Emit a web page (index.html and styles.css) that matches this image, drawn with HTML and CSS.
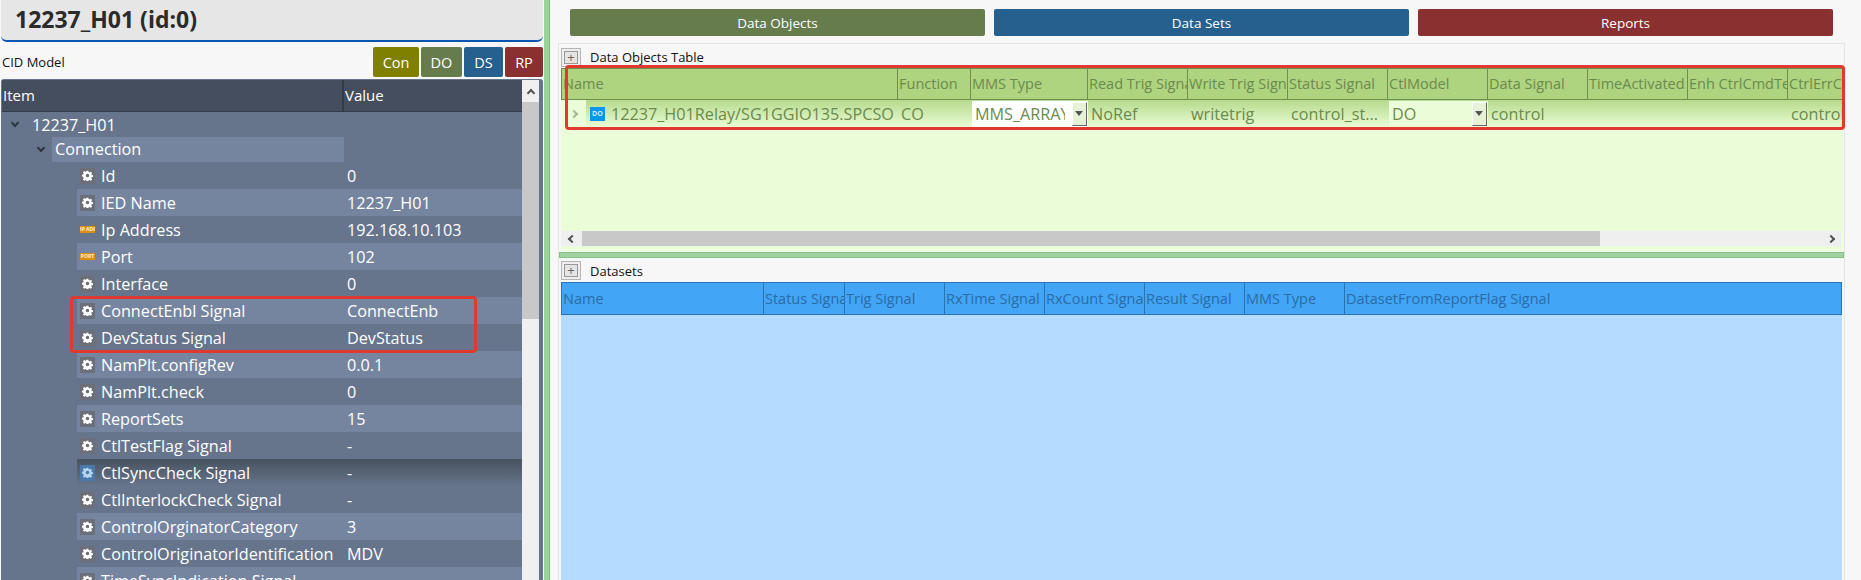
FILE: index.html
```html
<!DOCTYPE html>
<html lang="en">
    <head>
        <meta charset="UTF-8">
        <title>12237_H01</title>
        <link rel="stylesheet" href="styles.css">
    </head>
    <body>
        <svg class="defs" width="0" height="0">
            <symbol id="gear" viewBox="0 0 16 16">
                <path d="M6.7 1h2.6l.4 2 1.3.6 1.8-1.1 1.8 1.8-1.1 1.8.6 1.3 1.9.4v2.4l-1.9.4-.6 1.3 1.1 1.8-1.8 1.8-1.8-1.1-1.3.6-.4 1.9H6.7l-.4-1.9-1.3-.6-1.8 1.1-1.8-1.8 1.1-1.8-.6-1.3L0 9.2V6.8l1.9-.4.6-1.3-1.1-1.8 1.8-1.8 1.8 1.1 1.3-.6zM8 5.4a2.6 2.6 0 1 0 0 5.2 2.6 2.6 0 0 0 0-5.2z" fill-rule="evenodd"/>
            </symbol>
        </svg>

        <div class="left">
            <div class="title-bar">12237_H01 (id:0)</div>
            <div class="tool-row">
                <span class="tool-label">CID Model</span>
                <div class="tool-buttons">
                    <button class="tool-btn con">Con</button>
                    <button class="tool-btn do">DO</button>
                    <button class="tool-btn ds">DS</button>
                    <button class="tool-btn rp">RP</button>
                </div>
            </div>

            <div class="tree">
                <div class="tree-main">
                    <div class="tree-head">
                        <div class="tree-head-item">Item</div>
                        <div class="tree-head-value">Value</div>
                    </div>

                    <div class="root-row"><span class="chevron"></span>12237_H01</div>
                    <div class="conn-row"><span class="chevron"></span><span class="conn-name">Connection</span></div>

                    <div class="row"><div class="name"><svg class="gear-box"><use href="#gear" x="2" y="2" width="11" height="11"/></svg>Id</div><div class="value">0</div></div>
                    <div class="row band"><div class="name"><svg class="gear-box"><use href="#gear" x="2" y="2" width="11" height="11"/></svg>IED Name</div><div class="value">12237_H01</div></div>
                    <div class="row"><div class="name"><span class="tag">IP ADR</span>Ip Address</div><div class="value">192.168.10.103</div></div>
                    <div class="row band"><div class="name"><span class="tag">PORT</span>Port</div><div class="value">102</div></div>
                    <div class="row"><div class="name"><svg class="gear-box"><use href="#gear" x="2" y="2" width="11" height="11"/></svg>Interface</div><div class="value">0</div></div>
                    <div class="mark-rows">
                        <div class="row band"><div class="name"><svg class="gear-box"><use href="#gear" x="2" y="2" width="11" height="11"/></svg>ConnectEnbl Signal</div><div class="value">ConnectEnb</div></div>
                        <div class="row"><div class="name"><svg class="gear-box"><use href="#gear" x="2" y="2" width="11" height="11"/></svg>DevStatus Signal</div><div class="value">DevStatus</div></div>
                        <div class="red-box tree-mark"></div>
                    </div>
                    <div class="row band"><div class="name"><svg class="gear-box"><use href="#gear" x="2" y="2" width="11" height="11"/></svg>NamPlt.configRev</div><div class="value">0.0.1</div></div>
                    <div class="row"><div class="name"><svg class="gear-box"><use href="#gear" x="2" y="2" width="11" height="11"/></svg>NamPlt.check</div><div class="value">0</div></div>
                    <div class="row band"><div class="name"><svg class="gear-box"><use href="#gear" x="2" y="2" width="11" height="11"/></svg>ReportSets</div><div class="value">15</div></div>
                    <div class="row"><div class="name"><svg class="gear-box"><use href="#gear" x="2" y="2" width="11" height="11"/></svg>CtlTestFlag Signal</div><div class="value">-</div></div>
                    <div class="row hover"><div class="name"><svg class="gear-box blue"><use href="#gear" x="2" y="2" width="11" height="11"/></svg>CtlSyncCheck Signal</div><div class="value">-</div></div>
                    <div class="row"><div class="name"><svg class="gear-box"><use href="#gear" x="2" y="2" width="11" height="11"/></svg>CtlInterlockCheck Signal</div><div class="value">-</div></div>
                    <div class="row band"><div class="name"><svg class="gear-box"><use href="#gear" x="2" y="2" width="11" height="11"/></svg>ControlOrginatorCategory</div><div class="value">3</div></div>
                    <div class="row"><div class="name"><svg class="gear-box"><use href="#gear" x="2" y="2" width="11" height="11"/></svg>ControlOriginatorIdentification</div><div class="value">MDV</div></div>
                    <div class="row band"><div class="name"><svg class="gear-box"><use href="#gear" x="2" y="2" width="11" height="11"/></svg>TimeSyncIndication Signal</div><div class="value">-</div></div>
                </div>
                <div class="tree-scroll">
                    <div class="scroll-up"><span class="arrow-up"></span></div>
                    <div class="scroll-thumb"></div>
                </div>
            </div>
        </div>

        <div class="splitter"></div>

        <div class="right">
            <div class="tabs">
                <button class="tab do">Data Objects</button>
                <button class="tab ds">Data Sets</button>
                <button class="tab rp">Reports</button>
            </div>

            <div class="group">
                <div class="group-head">
                    <span class="plus">+</span>
                    <span class="group-title">Data Objects Table</span>
                </div>
                <div class="objects">
                    <div class="grid-wrap">
                        <div class="obj-grid obj-head">
                            <div>Name</div>
                            <div>Function</div>
                            <div>MMS Type</div>
                            <div>Read Trig Signal</div>
                            <div>Write Trig Signal</div>
                            <div>Status Signal</div>
                            <div>CtlModel</div>
                            <div>Data Signal</div>
                            <div>TimeActivated</div>
                            <div>Enh CtrlCmdTest</div>
                            <div>CtrlErrCode</div>
                        </div>
                        <div class="obj-grid obj-row">
                            <div class="name-cell">
                                <span class="expander"><span class="arrow-right"></span></span>
                                <span class="do-icon">DO</span>
                                <span>12237_H01Relay/SG1GGIO135.SPCSO</span>
                            </div>
                            <div class="cell">CO</div>
                            <div class="combo white"><span class="combo-text">MMS_ARRAY</span><span class="combo-btn"></span></div>
                            <div class="cell">NoRef</div>
                            <div class="cell">writetrig</div>
                            <div class="cell">control_st...</div>
                            <div class="combo"><span class="combo-text">DO</span><span class="combo-btn"></span></div>
                            <div class="cell">control</div>
                            <div class="cell"></div>
                            <div class="cell"></div>
                            <div class="cell">control</div>
                        </div>
                        <div class="red-box table-mark"></div>
                    </div>
                    <div class="obj-empty"></div>
                    <div class="h-scroll">
                        <span class="h-arrow"><span class="arrow-left"></span></span>
                        <span class="h-thumb"></span>
                        <span class="h-arrow end"><span class="arrow-right dark"></span></span>
                    </div>
                </div>

                <div class="group-split"></div>

                <div class="group-head low">
                    <span class="plus">+</span>
                    <span class="group-title">Datasets</span>
                </div>
                <div class="ds-grid">
                    <div>Name</div>
                    <div>Status Signal</div>
                    <div>Trig Signal</div>
                    <div>RxTime Signal</div>
                    <div>RxCount Signal</div>
                    <div>Result Signal</div>
                    <div>MMS Type</div>
                    <div>DatasetFromReportFlag Signal</div>
                </div>
                <div class="ds-body"></div>
            </div>
        </div>
    </body>
</html>
```

FILE: styles.css
```css
* {
    box-sizing: border-box;
}
html, body {
    margin: 0;
    height: 580px;
    overflow: hidden;
}
body {
    display: flex;
    background-color: #f7f7f7;
    font-family: "Open Sans", "Noto Sans", sans-serif;
    font-size: 16.2px;
    color: #fff;
}
button {
    border: none;
    padding: 0;
    font-family: inherit;
    color: #fff;
}
.defs {
    position: absolute;
}

/* left side */
.left {
    width: 542px;
    margin-left: 1px;
    flex: none;
}
.title-bar {
    height: 42px;
    padding-left: 14px;
    padding-bottom: 2px;
    display: flex;
    align-items: center;
    background-color: #e6e6e6;
    border-bottom: 2px solid #0a55b0;
    border-radius: 0 0 6px 6px;
    color: #2b2b2b;
    font-size: 23px;
    font-weight: 700;
}
.tool-row {
    height: 37px;
    padding-top: 5px;
    display: flex;
    justify-content: space-between;
}
.tool-label {
    margin-left: 1px;
    line-height: 30px;
    color: #111;
    font-size: 13px;
}
.tool-buttons {
    display: flex;
    gap: 2px;
}
.tool-btn {
    height: 30px;
    border-radius: 2px;
    font-size: 14.5px;
}
.tool-btn.con { width: 46px; background-color: #808000; }
.tool-btn.do { width: 41px; background-color: #667c4d; }
.tool-btn.ds { width: 39px; background-color: #26608f; }
.tool-btn.rp { width: 38px; background-color: #8a3030; }

.tree {
    height: 501px;
    padding: 1px 5px 0 1px;
    display: flex;
    background-color: #66758c;
    border-radius: 3px 3px 0 0;
}
.tree-main {
    width: 520px;
    flex: none;
}
.tree-head {
    height: 32px;
    display: flex;
    background-color: #454e5e;
    border-bottom: 1px solid #333b47;
    font-size: 15px;
    line-height: 31px;
}
.tree-head-item {
    width: 342px;
    padding-left: 1px;
    border-right: 2px solid #333b47;
}
.tree-head-value {
    padding-left: 1px;
}
.root-row {
    height: 25px;
    padding-left: 10px;
    display: flex;
    align-items: center;
}
.conn-row {
    height: 25px;
    padding-left: 36px;
    display: flex;
    align-items: center;
}
.chevron {
    width: 6px;
    height: 6px;
    margin-right: 14px;
    margin-top: -4px;
    border-right: 2px solid #2e3542;
    border-bottom: 2px solid #2e3542;
    transform: rotate(45deg);
}
.conn-row .chevron {
    margin-right: 8px;
}
.conn-name {
    width: 292px;
    height: 25px;
    padding-left: 3px;
    line-height: 25px;
    background-color: #76859f;
}
.row {
    height: 27px;
    margin-left: 75px;
    display: flex;
    align-items: center;
}
.band {
    background-color: #76859f;
}
.hover {
    background: linear-gradient(#48525f, #66758c);
}
.name {
    width: 267px;
    padding-left: 3px;
    display: flex;
    align-items: center;
    white-space: nowrap;
}
.value {
    padding-left: 3px;
}
.gear-box {
    width: 15px;
    height: 16px;
    margin-right: 6px;
    flex: none;
    background-color: #6d6f78;
    fill: #fff;
}
.gear-box.blue {
    background-color: #4a78a8;
    fill: #b5d5f0;
}
.tag {
    width: 15px;
    height: 7px;
    margin-right: 6px;
    flex: none;
    background-color: #e08e12;
    color: #fff3d0;
    font-size: 5px;
    font-weight: 700;
    line-height: 7px;
    text-align: center;
    overflow: hidden;
    white-space: nowrap;
}
.mark-rows {
    position: relative;
}
.red-box {
    position: absolute;
    border: 3px solid #e0392f;
    border-radius: 4px;
}
.tree-mark {
    left: 68px;
    top: -1px;
    width: 407px;
    height: 57px;
}
.tree-scroll {
    width: 17px;
    flex: none;
    align-self: flex-start;
    height: 500px;
    background-color: #f0f0f0;
}
.scroll-up {
    height: 22px;
    display: flex;
    justify-content: center;
    padding-top: 10px;
}
.arrow-up {
    width: 6px;
    height: 6px;
    border-left: 2px solid #555;
    border-top: 2px solid #555;
    transform: rotate(45deg);
}
.scroll-thumb {
    height: 217px;
    background-color: #c8c8c8;
}

.splitter {
    width: 6px;
    flex: none;
    margin-left: 1px;
    background-color: #98d598;
    border-right: 1px solid #7dbb7d;
}

/* right side */
.right {
    flex: 1;
    min-width: 0;
    padding: 9px 16px 0 8px;
}
.tabs {
    height: 27px;
    margin-left: 12px;
    margin-right: 12px;
    display: flex;
    gap: 9px;
}
.tab {
    flex: 1;
    border-radius: 2px;
    font-size: 13.5px;
}
.tab.do { background-color: #667c4d; }
.tab.ds { background-color: #26608f; }
.tab.rp { background-color: #8a3030; }

.group {
    height: 537px;
    margin-top: 7px;
    padding-left: 2px;
    border: 1px solid #e4e4e4;
    border-bottom: none;
    display: flex;
    flex-direction: column;
}
.group-head {
    height: 24px;
    padding-top: 2px;
    display: flex;
    align-items: center;
    gap: 9px;
    flex: none;
}
.group-head.low {
    height: 23px;
    padding-top: 0;
}
.plus {
    width: 20px;
    height: 19px;
    background-color: #e4e4e4;
    border: 1px solid #b5b5b5;
    box-shadow: inset 0 0 0 2px #eee, inset 0 0 0 3px #999;
    color: #666;
    font-size: 13px;
    line-height: 16px;
    text-align: center;
}
.group-title {
    color: #111;
    font-size: 13px;
}

.objects {
    height: 183px;
    margin-right: 1px;
    display: flex;
    flex-direction: column;
    flex: none;
    background-color: #ebfdd8;
}
.grid-wrap {
    position: relative;
}
.obj-grid {
    display: grid;
    grid-template-columns: 337px 73px 117px repeat(7, 100px) 55px;
}
.obj-head {
    height: 32px;
    background-color: #afd480;
    border: 1px solid #6f8f50;
    border-width: 1px 0;
    color: #6b8a4c;
    font-size: 14.5px;
    line-height: 30px;
}
.obj-head div {
    padding-left: 1px;
    border-right: 1px solid #6f8f50;
    overflow: hidden;
    white-space: nowrap;
}
.obj-head div:first-child {
    border-left: 1px solid #6f8f50;
}
.obj-head div:last-child {
    border-right: none;
}
.obj-row {
    height: 28px;
    background: linear-gradient(#b6da8c, #ebfdd8);
    color: #6b8a4c;
    font-size: 16.2px;
    line-height: 28px;
}
.name-cell {
    padding-right: 2px;
    display: flex;
    align-items: center;
    white-space: nowrap;
    overflow: hidden;
}
.expander {
    width: 25px;
    height: 28px;
    margin-right: 4px;
    flex: none;
    display: flex;
    align-items: center;
    justify-content: center;
    background-color: #ebfdd8;
}
.arrow-right {
    width: 6px;
    height: 6px;
    border-right: 2px solid #a8b69a;
    border-top: 2px solid #a8b69a;
    transform: rotate(45deg);
}
.arrow-right.dark {
    border-color: #555;
}
.arrow-left {
    width: 6px;
    height: 6px;
    border-left: 2px solid #555;
    border-bottom: 2px solid #555;
    transform: rotate(45deg);
}
.do-icon {
    width: 15px;
    height: 14px;
    margin-right: 6px;
    flex: none;
    background-color: #0a96ea;
    color: #cdeafc;
    font-size: 7px;
    font-weight: 700;
    line-height: 14px;
    text-align: center;
}
.cell {
    padding-left: 3px;
    white-space: nowrap;
    overflow: hidden;
}
.combo {
    margin: 1px 0 0 1px;
    padding-left: 3px;
    display: flex;
    align-items: center;
    justify-content: space-between;
    background-color: #ebfdd8;
    border-bottom: 1px solid #6f8f50;
    overflow: hidden;
}
.combo.white {
    background-color: #fff;
}
.combo-text {
    width: 90px;
    overflow: hidden;
    white-space: nowrap;
    line-height: 25px;
}
.combo-btn {
    width: 15px;
    height: 24px;
    margin-right: 1px;
    flex: none;
    position: relative;
    background-color: #e6f2d8;
    border: 1px solid #fff;
    border-right: 1px solid #666;
    border-bottom: 1px solid #666;
}
.combo-btn::after {
    content: "";
    position: absolute;
    left: 2px;
    top: 8px;
    border: 4px solid transparent;
    border-top: 5px solid #555;
}
.table-mark {
    left: 4px;
    top: -3px;
    width: 1280px;
    height: 65px;
}
.obj-empty {
    flex: 1;
}
.h-scroll {
    height: 15px;
    margin: 0 2px 5px 0;
    display: flex;
    flex: none;
    background-color: #efefef;
}
.h-arrow {
    width: 21px;
    flex: none;
    display: flex;
    align-items: center;
    justify-content: center;
}
.h-arrow.end {
    margin-left: auto;
}
.h-thumb {
    width: 1018px;
    background-color: #c8c8c8;
}
.group-split {
    height: 6px;
    margin: 1px 0 1px -2px;
    flex: none;
    background-color: #9fd29f;
    border: 1px solid #85c085;
}
.ds-grid {
    height: 33px;
    margin-right: 2px;
    display: grid;
    grid-template-columns: 202px 81px repeat(5, 100px) 1fr;
    flex: none;
    background-color: #42a5f5;
    border: 1px solid #2a72b2;
    color: #2a6ca8;
    font-size: 14.5px;
    line-height: 31px;
}
.ds-grid div {
    border-right: 1px solid #2a72b2;
    padding-left: 1px;
    overflow: hidden;
    white-space: nowrap;
}
.ds-grid div:last-child {
    border-right: none;
}
.ds-body {
    flex: 1;
    margin-right: 2px;
    background-color: #b5dcfe;
}
```
